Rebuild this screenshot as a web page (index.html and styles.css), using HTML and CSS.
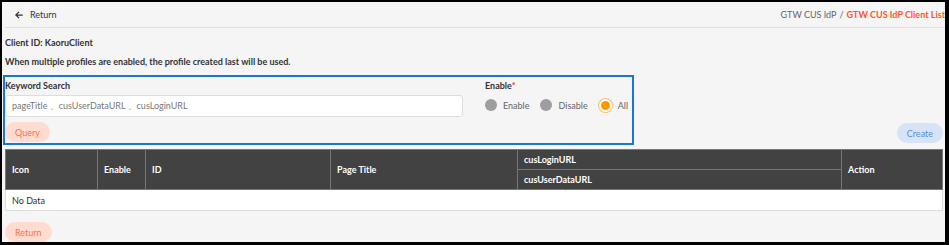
FILE: index.html
```html
<!DOCTYPE html>
<html lang="en">
<head>
<meta charset="utf-8">
<title>GTW CUS IdP Client List</title>
<link rel="stylesheet" href="styles.css">
</head>
<body>
<div class="frame">
  <header class="topbar">
    <a class="back" href="#">
      <svg class="back-icon" viewBox="0 0 24 24" width="10" height="10"><path d="M21 12H5M12 4.5L4.5 12 12 19.5" fill="none" stroke="#333" stroke-width="3"/></svg>
      <span>Return</span>
    </a>
    <nav class="crumbs"><span class="crumb">GTW CUS IdP</span><span class="sep">/</span><strong class="crumb-current">GTW CUS IdP Client List</strong></nav>
  </header>
  <main class="content">
    <p class="info">Client ID: KaoruClient</p>
    <p class="info">When multiple profiles are enabled, the profile created last will be used.</p>
    <div class="toolbar">
      <section class="search">
        <div class="search-row">
          <div class="field keyword">
            <label class="label">Keyword Search</label>
            <div class="input">pageTitle 、cusUserDataURL 、cusLoginURL</div>
          </div>
          <div class="field enable">
            <label class="label">Enable<span class="req">*</span></label>
            <div class="radios">
              <span class="radio"><span class="dot"></span>Enable</span>
              <span class="radio"><span class="dot"></span>Disable</span>
              <span class="radio checked"><span class="dot"></span>All</span>
            </div>
          </div>
        </div>
        <button class="btn btn-orange">Query</button>
      </section>
      <button class="btn btn-blue">Create</button>
    </div>
    <table class="grid">
      <thead>
        <tr>
          <th rowspan="2" class="c-icon">Icon</th>
          <th rowspan="2" class="c-enable">Enable</th>
          <th rowspan="2" class="c-id">ID</th>
          <th rowspan="2" class="c-title">Page Title</th>
          <th class="c-url">cusLoginURL</th>
          <th rowspan="2" class="c-action">Action</th>
        </tr>
        <tr>
          <th class="c-url">cusUserDataURL</th>
        </tr>
      </thead>
      <tbody>
        <tr><td colspan="6" class="empty">No Data</td></tr>
      </tbody>
    </table>
    <button class="btn btn-orange return">Return</button>
  </main>
</div>
</body>
</html>
```

FILE: styles.css
```css
* { box-sizing: border-box; }
html, body { margin: 0; padding: 0; }
body {
  font-family: "Lato", "Noto Sans", sans-serif;
  font-size: 9px;
  color: #333;
  background: #000;
}
.frame {
  width: 949px;
  height: 245px;
  border-style: solid;
  border-color: #000;
  border-width: 2px 4px 3px 2px;
  background: #f5f5f5;
  overflow: hidden;
}
.topbar {
  height: 26px;
  margin: 0 0 0 3px;
  padding: 0 0 0 9px;
  border-bottom: 1px solid #e0e0e0;
  display: flex;
  align-items: center;
  justify-content: space-between;
}
.back {
  display: flex;
  align-items: center;
  gap: 6px;
  color: #333;
  text-decoration: none;
}
.crumbs { color: #666; }
.sep { margin: 0 3px; }
.crumb-current { color: #ff5722; font-weight: 700; }
.content { padding: 0 2px 0 3px; }
.info {
  margin: 0;
  font-weight: 700;
  color: #333;
}
.info:first-child { margin-top: 10px; height: 19px; line-height: 10px; }
.info + .info { line-height: 10px; height: 18px; }
.toolbar {
  display: flex;
  justify-content: space-between;
  align-items: flex-end;
  margin-left: -2px;
}
.search {
  width: 631px;
  height: 70px;
  border: 2px solid #1976d2;
  padding: 3px 0 0 0;
}
.search-row { display: flex; }
.label { display: block; font-weight: 700; color: #333; height: 15px; line-height: 12px; }
.req { color: #e53935; }
.keyword { width: 480px; }
.input {
  width: 458px;
  height: 22px;
  background: #fff;
  border: 1px solid #ddd;
  border-radius: 3px;
  padding: 0 6px;
  line-height: 20px;
  color: #777;
}
.radios { display: flex; gap: 11px; align-items: center; height: 20px; }
.radio { display: flex; align-items: center; gap: 6px; color: #666; }
.dot {
  width: 12px; height: 12px; border-radius: 50%;
  background: #9e9e9e;
}
.radio.checked .dot {
  width: 13px; height: 13px;
  background: #ff9800;
  border: 2px solid #fff;
  box-shadow: 0 0 0 1px #ffc062;
}
.btn {
  font-family: inherit;
  font-size: 9px;
  border: none;
  border-radius: 10px;
  height: 20px;
  padding: 0 10px;
  cursor: pointer;
}
.btn-orange { background: #ffdccf; color: #ff7043; margin-top: 5px; }
.btn-blue { background: #d7e4f7; color: #5b8fd8; margin-bottom: 2px; }
.grid {
  width: 938px;
  margin-top: 4px;
  border-collapse: collapse;
  background: #fff;
  border: 1px solid #ddd;
}
.grid th {
  background: #424242;
  color: #fff;
  font-weight: 700;
  text-align: left;
  padding: 0 6px;
  height: 20px;
  border: 1px solid #777;
}
.c-icon { width: 92px; }
.c-enable { width: 48px; }
.c-id { width: 185px; }
.c-title { width: 187px; }
.c-url { width: 324px; }
.grid td { height: 21px; padding: 0 6px; color: #333; }
.return { margin-top: 11px; }
```
